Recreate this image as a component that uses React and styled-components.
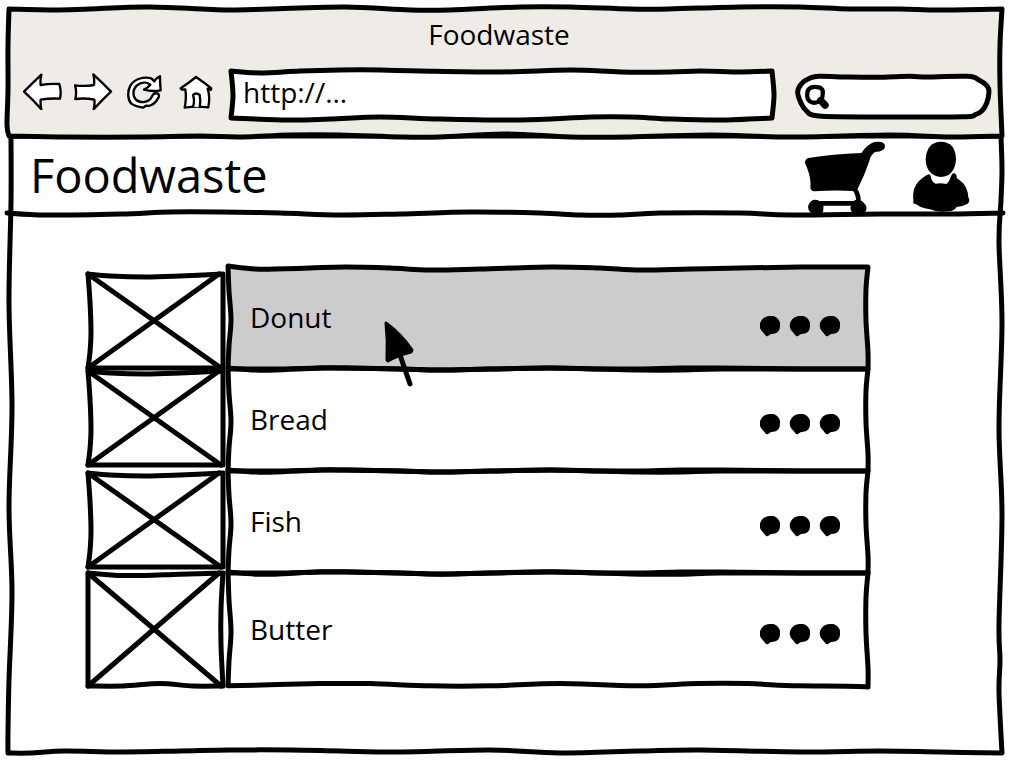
import React from "react";
import styled, { createGlobalStyle } from "styled-components";

const GlobalStyle = createGlobalStyle`
  *, *::before, *::after { box-sizing: border-box; }
  body {
    margin: 0;
    background: #fff;
    color: #000;
    font-family: "Open Sans", "Noto Sans", sans-serif;
    font-size: 28px;
    line-height: 36px;
  }
`;

/* ---------- hand-drawn outlines ---------- */

// Smooth curve through the points, continuing from the current pen position.
function curve(points) {
  let d = "";
  for (let i = 0; i < points.length - 1; i++) {
    const p0 = points[i - 1] || points[i];
    const p1 = points[i];
    const p2 = points[i + 1];
    const p3 = points[i + 2] || p2;
    const c1 = [p1[0] + (p2[0] - p0[0]) / 6, p1[1] + (p2[1] - p0[1]) / 6];
    const c2 = [p2[0] - (p3[0] - p1[0]) / 6, p2[1] - (p3[1] - p1[1]) / 6];
    d += `C${[...c1, ...c2, ...p2].map((n) => n.toFixed(2)).join(" ")}`;
  }
  return d;
}

const stroke = (points) => `M${points[0].join(" ")}${curve(points)}`;
const outline = (...edges) => `M${edges[0][0].join(" ")}${edges.map(curve).join("")}Z`;

const Outline = styled.svg`
  position: absolute;
  inset: 0;
  z-index: -1;
  width: 100%;
  height: 100%;
  overflow: visible;
  pointer-events: none;
  fill: ${(p) => p.$fill || "none"};
  stroke: #000;
  stroke-width: 5px;
  stroke-linejoin: round;
  stroke-linecap: round;

  path { vector-effect: non-scaling-stroke; }
`;

function Sketch({ box, paths, fill }) {
  return (
    <Outline viewBox={box} preserveAspectRatio="none" $fill={fill} aria-hidden="true">
      {paths.map((d) => (
        <path key={d} d={d} />
      ))}
    </Outline>
  );
}

const CHROME = outline(
  [[9, 9], [60, 10], [90, 9], [150, 7], [230, 10], [270, 9], [345, 7], [410, 10], [450, 10], [520, 7], [570, 7], [630, 9], [669, 9], [740, 7], [800, 7], [850, 9], [900, 9], [940, 10], [1002, 9]],
  [[1002, 9], [1000, 45], [1000, 85], [1002, 136]],
  [[1002, 136], [950, 137], [890, 135], [790, 137], [710, 135], [630, 137], [570, 137], [505, 134], [440, 137], [400, 137], [340, 135], [290, 135], [240, 137], [200, 136], [140, 137], [67, 137], [9, 136]],
  [[9, 136], [7, 125], [8, 90], [8, 45], [9, 9]]
);

const PAGE = outline(
  [[11, 136], [1001, 136]],
  [[1001, 136], [1002, 170], [1001, 200], [999, 242], [1002, 323], [999, 427], [1002, 515], [999, 624], [1000, 660], [999, 692], [1002, 753]],
  [[1002, 753], [940, 752], [880, 751], [800, 752], [700, 750], [640, 751], [560, 753], [490, 750], [400, 752], [340, 751], [290, 750], [230, 750], [180, 751], [120, 752], [65, 751], [30, 753], [8, 753]],
  [[8, 753], [8, 732], [9, 680], [12, 592], [9, 507], [12, 407], [9, 303], [11, 202], [11, 136]]
);

const HEADER_RULE = stroke([[7, 213], [45, 215], [120, 214], [170, 212], [220, 212], [280, 213], [340, 215], [400, 214], [470, 212], [540, 213], [580, 215], [620, 215], [660, 213], [740, 213], [790, 215], [880, 214], [950, 214], [1003, 213]]);

const ADDRESS = outline(
  [[231, 71], [260, 73], [300, 71], [340, 70], [380, 70], [420, 71], [500, 72], [570, 70], [620, 72], [669, 72], [700, 71], [740, 72], [771, 71]],
  [[771, 71], [773, 95], [771, 118]],
  [[771, 118], [720, 120], [669, 119], [630, 117], [590, 117], [520, 120], [440, 119], [380, 117], [330, 119], [290, 120], [231, 118]],
  [[231, 118], [233, 95], [231, 71]]
);

const SEARCH = outline([
  [640, 232], [720, 229], [760, 231], [895, 229], [930, 241], [953, 258], [959, 275], [952, 310], [938, 333], [918, 345], [880, 351], [640, 352], [450, 349], [412, 333], [396, 310], [386, 276], [398, 251], [422, 235], [450, 229], [540, 231], [640, 232],
]);

const ROW_RIGHT = [[640, 0], [638, 22], [638, 53], [640, 84], [640, 101]];
const ROW_LEFT = [[0, 101], [1, 78], [3, 52], [1, 24], [0, -1]];
const ROW_TOP_FIRST = [[0, -1], [27, 2], [47, 2], [82, 1], [117, 0], [162, 1], [202, 3], [252, 2], [322, 0], [372, 1], [412, 3], [462, 2], [512, 1], [572, 0], [640, 0]];
const ROW_TOP = [[0, -1], [27, 1], [47, 1], [92, -1], [117, -1], [172, 0], [212, 1], [262, 0], [322, -1], [372, 0], [412, 1], [452, 1], [492, 0], [572, 0], [640, 0]];
const ROW_BOTTOM = [[640, 101], [572, 101], [492, 100], [452, 100], [412, 101], [372, 101], [322, 100], [262, 101], [212, 102], [172, 101], [117, 100], [92, 100], [47, 101], [0, 101]];
const ROW_BOTTOM_LAST = [[640, 100], [570, 100], [520, 98], [470, 98], [412, 100], [332, 98], [262, 100], [202, 100], [142, 98], [92, 98], [0, 100]];

const rowOutline = (first, last) =>
  outline(first ? ROW_TOP_FIRST : ROW_TOP, ROW_RIGHT, last ? ROW_BOTTOM_LAST : ROW_BOTTOM, ROW_LEFT);

const CROSS = ["M0 0L133 94", "M0 94L131 0"];

const THUMB_WIDE = outline(
  [[0, 0], [22, 2], [57, 3], [92, 2], [135, 0]],
  [[135, 0], [135, 94]],
  [[135, 94], [0, 94]],
  [[0, 94], [2, 78], [3, 58], [2, 28], [0, 0]]
);

const THUMB_TALL = outline(
  [[0, 0], [30, 2], [57, 2], [92, 1], [135, 0]],
  [[135, 0], [133, 30], [133, 60], [135, 94]],
  [[135, 94], [105, 94], [72, 92], [35, 94], [0, 94]],
  [[0, 94], [0, 0]]
);

/* ---------- page structure ---------- */

const Window = styled.div`
  display: flex;
  flex-direction: column;
  min-height: 100vh;
  padding: 9px 7px 7px 8px;
`;

const Chrome = styled.header`
  position: relative;
  z-index: 1;
  padding: 7px 12px 17px 15px;
`;

const WindowTitle = styled.div`
  padding: 0 15px 19px 0;
  text-align: center;
`;

const Toolbar = styled.div`
  display: flex;
  align-items: flex-start;
`;

const Nav = styled.nav`
  display: flex;
  gap: 10px;
  margin: 2px 14px 0 0;
`;

const IconButton = styled.button`
  display: block;
  padding: 0;
  border: 0;
  background: none;
  cursor: pointer;

  svg { display: block; }
`;

const NavIcon = styled.svg`
  width: 41px;
  height: 37px;
  fill: #fff;
  stroke: #000;
  stroke-width: 7px;
  stroke-linejoin: round;
  stroke-linecap: round;
`;

const AddressBar = styled.label`
  position: relative;
  z-index: 0;
  flex: 1;
  min-width: 0;
  height: 48px;
  margin-right: 25px;
`;

const SearchBox = styled.label`
  position: relative;
  z-index: 0;
  display: flex;
  align-items: center;
  width: 193px;
  height: 41px;
  margin-top: 5px;
  padding: 0 20px 0 8px;
`;

const Field = styled.input`
  display: block;
  width: 100%;
  min-width: 0;
  height: 100%;
  padding: 0 0 6px ${(p) => (p.$inset ? "12px" : "4px")};
  border: 0;
  outline: 0;
  background: none;
  color: inherit;
  font: inherit;
`;

const Page = styled.div`
  position: relative;
  z-index: 0;
  flex: 1;
`;

const SiteHeader = styled.div`
  position: relative;
  display: flex;
  align-items: center;
  justify-content: space-between;
  height: 78px;
  padding: 0 32px 0 22px;
`;

const Brand = styled.h1`
  margin: 0;
  font-size: 47px;
  font-weight: 400;
  line-height: 64px;
`;

const Actions = styled.div`
  display: flex;
  align-items: flex-start;
  gap: 26px;
  height: 68px;
`;

const List = styled.ul`
  margin: 0;
  padding: 53px 134px 68px 80px;
  list-style: none;
`;

const Item = styled.li`
  display: grid;
  grid-template-columns: 135px 1fr;
  column-gap: 5px;
  align-items: end;
  height: ${(p) => (p.$tall ? 112 : 102)}px;
`;

const Thumb = styled.div`
  position: relative;
  z-index: 0;
  height: ${(p) => (p.$tall ? 113 : 94)}px;
  margin-bottom: ${(p) => (p.$raised ? 6 : 1)}px;
`;

const Row = styled.div`
  position: relative;
  z-index: 0;
  display: flex;
  align-items: center;
  justify-content: space-between;
  height: 100%;
  padding: 0 28px 2px 22px;
`;

const MoreButton = styled(IconButton)`
  margin-top: ${(p) => (p.$low ? 18 : 10)}px;
`;

const Pointer = styled.svg`
  position: absolute;
  top: 52px;
  left: 154px;
  width: 34px;
  height: 68px;
  pointer-events: none;
`;

/* ---------- icons ---------- */

const NAV = [
  { label: "Back", box: "68 218 123 111", paths: ["M71 274Q100 245 123 223Q119 240 121 254Q150 249 177 251Q184 272 179 295Q150 293 121 298Q120 315 123 327Q97 297 71 274Z"] },
  { label: "Forward", box: "222 218 123 111", paths: ["M225 255Q254 259 282 254Q284 235 280 222Q308 248 333 274Q305 300 281 327Q285 312 283 298Q254 292 226 296Q231 274 225 255Z"] },
  { label: "Reload", box: "375 218 123 111", paths: ["M480 228Q480 249 482 270Q457 275 432 268Q444 262 451 253C440 244 424 245 411 255C398 266 397 285 407 297C419 309 440 308 451 296C458 286 459 277 472 279Q482 284 472 297Q464 312 446 317L438 316L430 322Q405 318 394 310C382 298 382 272 391 256C403 236 430 228 454 234L463 243Q467 234 480 228Z"] },
  { label: "Home", box: "528 218 123 111", paths: ["M542 264Q565 249 588 230Q613 247 634 264L632 269Q628 264 623 265Q631 290 625 321Q590 316 554 322Q560 293 556 267L546 268Z", "M579 319Q585 301 579 284Q588 275 599 284Q603 303 599 320"] },
];

function CartIcon() {
  return (
    <svg width="82" height="73" viewBox="405 420 246 219" aria-hidden="true">
      <path d="M408 486Q408 474 418 471Q490 459 577 456Q596 429 616 423Q648 418 648 436Q648 452 618 453Q603 464 601 480Q588 520 566 563L554 570Q490 567 437 571Q424 570 424 558Q428 530 408 486Z" />
      <path d="M556 563Q570 580 569 610M450 607H560" fill="none" stroke="#000" strokeWidth="14" />
      <path d="M427 600Q438 592 451 600Q466 606 463 623L462 634Q441 646 424 634Q413 622 420 608ZM553 600Q567 592 580 601L590 612Q596 626 587 634Q567 644 549 634Q539 618 550 607Z" />
    </svg>
  );
}

function UserIcon() {
  return (
    <svg width="58" height="71" viewBox="729 420 174 213" aria-hidden="true">
      <path d="M816 422C844 422 861 441 861 475C860 507 842 528 816 528C789 528 770 506 770 475C771 441 789 422 816 422Z" />
      <path d="M780 520Q785 520 786 532Q792 547 800 548Q816 545 831 549Q840 545 844 530L849 519Q858 514 862 522L864 532Q884 545 891 560Q898 575 898 589Q905 599 896 608Q881 616 863 618Q857 630 837 631Q805 635 783 625Q755 621 746 612L733 607V595Q729 566 747 543Q765 525 780 520Z" />
    </svg>
  );
}

function SearchIcon() {
  return (
    <svg width="28" height="28" viewBox="409 248 84 84" aria-hidden="true">
      <path d="M429 257Q444 252 461 257Q475 263 471 281Q471 301 456 307Q440 314 427 306Q415 297 417 281Q416 264 429 257Z" fill="#fff" stroke="#000" strokeWidth="15" />
      <path d="M464 302L480 319" stroke="#000" strokeWidth="25" strokeLinecap="round" />
    </svg>
  );
}

const DOT = outline([
  [40, 0], [51, 6], [59, 17], [60, 29], [57, 43], [47, 52], [32, 55], [21, 61], [10, 50], [1, 38], [0, 22], [10, 7], [24, 1], [40, 0],
]);

function DotsIcon() {
  return (
    <svg width="80" height="21" viewBox="0 0 240 63" aria-hidden="true">
      <path d={DOT} />
      <path d={DOT} transform="translate(90 0)" />
      <path d={DOT} transform="translate(180 0)" />
    </svg>
  );
}

const ITEMS = [
  { name: "Donut", active: true },
  { name: "Bread", raised: true },
  { name: "Fish", raised: true },
  { name: "Butter", tall: true },
];

export default function App() {
  return (
    <Window>
      <GlobalStyle />
      <Chrome>
        <Sketch box="8 9 994 127" paths={[CHROME]} fill="#efebe6" />
        <WindowTitle>Foodwaste</WindowTitle>
        <Toolbar>
          <Nav aria-label="Browser">
            {NAV.map(({ label, box, paths }) => (
              <IconButton key={label} type="button" aria-label={label}>
                <NavIcon viewBox={box} aria-hidden="true">
                  {paths.map((d) => (
                    <path key={d} d={d} />
                  ))}
                </NavIcon>
              </IconButton>
            ))}
          </Nav>
          <AddressBar>
            <Sketch box="231 71 540 48" paths={[ADDRESS]} fill="#fff" />
            <Field $inset type="text" aria-label="Address" defaultValue="http://..." />
          </AddressBar>
          <SearchBox>
            <Sketch box="384 228 578 124" paths={[SEARCH]} fill="#fff" />
            <SearchIcon />
            <Field type="search" aria-label="Search" />
          </SearchBox>
        </Toolbar>
      </Chrome>
      <Page>
        <Sketch box="8 136 994 617" paths={[PAGE]} />
        <SiteHeader>
          <Sketch box="8 136 994 78" paths={[HEADER_RULE]} />
          <Brand>Foodwaste</Brand>
          <Actions>
            <IconButton type="button" aria-label="Cart">
              <CartIcon />
            </IconButton>
            <IconButton type="button" aria-label="Account">
              <UserIcon />
            </IconButton>
          </Actions>
        </SiteHeader>
        <List>
          {ITEMS.map(({ name, active, raised, tall }, i) => (
            <Item key={name} $tall={tall}>
              <Thumb $raised={raised} $tall={tall}>
                <Sketch box="0 0 135 94" paths={[tall ? THUMB_TALL : THUMB_WIDE, ...CROSS]} />
              </Thumb>
              <Row>
                <Sketch
                  box="0 0 640 101"
                  paths={[rowOutline(i === 0, i === ITEMS.length - 1)]}
                  fill={active ? "#ccc" : "none"}
                />
                <span>{name}</span>
                <MoreButton type="button" aria-label={`More options for ${name}`} $low={active}>
                  <DotsIcon />
                </MoreButton>
                {active && (
                  <Pointer viewBox="0 0 34 68" aria-hidden="true">
                    <path d="M4 4Q19 15 30 31L29 33Q16 36 6 42L5 41Q6 22 4 4Z" stroke="#000" strokeWidth="3" strokeLinejoin="round" />
                    <path d="M18 36L28 65" stroke="#000" strokeWidth="5" strokeLinecap="round" />
                  </Pointer>
                )}
              </Row>
            </Item>
          ))}
        </List>
      </Page>
    </Window>
  );
}
